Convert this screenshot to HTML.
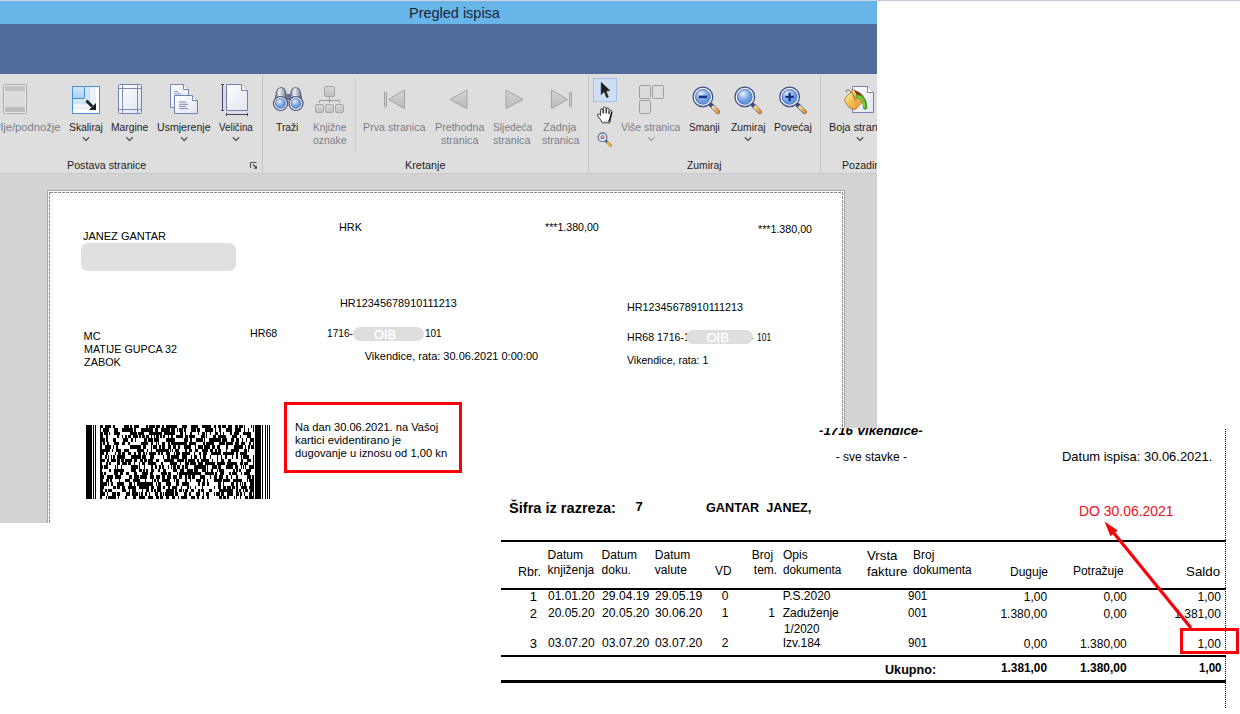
<!DOCTYPE html>
<html><head><meta charset="utf-8"><style>
html,body{margin:0;padding:0;background:#fff;width:1240px;height:714px;overflow:hidden;position:relative}
.t{position:absolute;white-space:pre;line-height:normal;font-family:"Liberation Sans",sans-serif}
</style></head><body>
<div id="s1" style="position:absolute;left:0;top:0;width:877px;height:523px;overflow:hidden;background:#d3d3d3">
<div style="position:absolute;left:0px;top:0px;width:877px;height:1px;background:#d3d5dd;"></div>
<div style="position:absolute;left:0px;top:1px;width:877px;height:23px;background:#67b5e9;"></div>
<div style="position:absolute;left:0px;top:24px;width:877px;height:50px;background:#4d6b9b;"></div>
<div style="position:absolute;left:0px;top:74px;width:877px;height:1px;background:#e2e0de;"></div>
<div style="position:absolute;left:0px;top:75px;width:877px;height:98px;background:#dedede;"></div>
<div style="position:absolute;left:0px;top:173px;width:877px;height:1px;background:#cbcbcb;"></div>
<div class=t style="left:408.50px;top:4px;font-size:15px;font-weight:normal;font-style:normal;color:#1b2438;transform:scaleX(0.9645);transform-origin:0 0;">Pregled ispisa</div>
<div class=t style="left:-33.50px;top:121px;font-size:11.5px;font-weight:normal;font-style:normal;color:#7b7e88;transform:scaleX(0.9752);transform-origin:0 0;">Zaglavlje/podnožje</div>
<div class=t style="left:68.60px;top:121px;font-size:11.5px;font-weight:normal;font-style:normal;color:#1e1e24;transform:scaleX(0.8980);transform-origin:0 0;">Skaliraj</div>
<div class=t style="left:110.70px;top:121px;font-size:11.5px;font-weight:normal;font-style:normal;color:#1e1e24;transform:scaleX(0.8988);transform-origin:0 0;">Margine</div>
<div class=t style="left:156.50px;top:121px;font-size:11.5px;font-weight:normal;font-style:normal;color:#1e1e24;transform:scaleX(0.9204);transform-origin:0 0;">Usmjerenje</div>
<div class=t style="left:219.00px;top:121px;font-size:11.5px;font-weight:normal;font-style:normal;color:#1e1e24;transform:scaleX(0.8528);transform-origin:0 0;">Veličina</div>
<div class=t style="left:275.60px;top:121px;font-size:11.5px;font-weight:normal;font-style:normal;color:#1e1e24;transform:scaleX(0.8915);transform-origin:0 0;">Traži</div>
<div class=t style="left:312.50px;top:121px;font-size:11.5px;font-weight:normal;font-style:normal;color:#7b7e88;transform:scaleX(0.8874);transform-origin:0 0;">Knjižne</div>
<div class=t style="left:312.50px;top:134px;font-size:11.5px;font-weight:normal;font-style:normal;color:#7b7e88;transform:scaleX(0.9051);transform-origin:0 0;">oznake</div>
<div class=t style="left:363.40px;top:121px;font-size:11.5px;font-weight:normal;font-style:normal;color:#7b7e88;transform:scaleX(0.9309);transform-origin:0 0;">Prva stranica</div>
<div class=t style="left:434.50px;top:121px;font-size:11.5px;font-weight:normal;font-style:normal;color:#7b7e88;transform:scaleX(0.9299);transform-origin:0 0;">Prethodna</div>
<div class=t style="left:440.50px;top:134px;font-size:11.5px;font-weight:normal;font-style:normal;color:#7b7e88;transform:scaleX(0.9288);transform-origin:0 0;">stranica</div>
<div class=t style="left:492.60px;top:121px;font-size:11.5px;font-weight:normal;font-style:normal;color:#7b7e88;transform:scaleX(0.8904);transform-origin:0 0;">Sljedeća</div>
<div class=t style="left:492.60px;top:134px;font-size:11.5px;font-weight:normal;font-style:normal;color:#7b7e88;transform:scaleX(0.9288);transform-origin:0 0;">stranica</div>
<div class=t style="left:543.00px;top:121px;font-size:11.5px;font-weight:normal;font-style:normal;color:#7b7e88;transform:scaleX(0.9504);transform-origin:0 0;">Zadnja</div>
<div class=t style="left:541.60px;top:134px;font-size:11.5px;font-weight:normal;font-style:normal;color:#7b7e88;transform:scaleX(0.9288);transform-origin:0 0;">stranica</div>
<div class=t style="left:620.70px;top:121px;font-size:11.5px;font-weight:normal;font-style:normal;color:#7b7e88;transform:scaleX(0.9049);transform-origin:0 0;">Više stranica</div>
<div class=t style="left:689.30px;top:121px;font-size:11.5px;font-weight:normal;font-style:normal;color:#1e1e24;transform:scaleX(0.8740);transform-origin:0 0;">Smanji</div>
<div class=t style="left:731.00px;top:121px;font-size:11.5px;font-weight:normal;font-style:normal;color:#1e1e24;transform:scaleX(0.8990);transform-origin:0 0;">Zumiraj</div>
<div class=t style="left:773.50px;top:121px;font-size:11.5px;font-weight:normal;font-style:normal;color:#1e1e24;transform:scaleX(0.9248);transform-origin:0 0;">Povećaj</div>
<div class=t style="left:828.50px;top:121px;font-size:11.5px;font-weight:normal;font-style:normal;color:#1e1e24;transform:scaleX(0.9398);transform-origin:0 0;">Boja stranice</div>
<div class=t style="left:66.70px;top:159px;font-size:11.5px;font-weight:normal;font-style:normal;color:#1e1e24;transform:scaleX(0.9329);transform-origin:0 0;">Postava stranice</div>
<div class=t style="left:404.50px;top:159px;font-size:11.5px;font-weight:normal;font-style:normal;color:#1e1e24;transform:scaleX(0.9446);transform-origin:0 0;">Kretanje</div>
<div class=t style="left:687.00px;top:159px;font-size:11.5px;font-weight:normal;font-style:normal;color:#1e1e24;transform:scaleX(0.8990);transform-origin:0 0;">Zumiraj</div>
<div class=t style="left:841.60px;top:159px;font-size:11.5px;font-weight:normal;font-style:normal;color:#1e1e24;transform:scaleX(0.9193);transform-origin:0 0;">Pozadina stranice</div>
<div style="position:absolute;left:262px;top:75px;width:1px;height:98px;background:#c6c6c6;"></div>
<div style="position:absolute;left:355px;top:78px;width:1px;height:74px;background:#cacaca;"></div>
<div style="position:absolute;left:588px;top:75px;width:1px;height:98px;background:#c6c6c6;"></div>
<div style="position:absolute;left:820px;top:75px;width:1px;height:98px;background:#c6c6c6;"></div>
<div style="position:absolute;left:47px;top:190px;width:798px;height:400px;background:#ffffff;box-sizing:border-box;border:1px solid #a6a6a6;"></div>
<svg style="position:absolute;left:0;top:0" width="877" height="523"><rect x="49.5" y="192.5" width="793" height="400" fill="none" stroke="#8a8a8a" stroke-width="1" stroke-dasharray="3 1" shape-rendering="crispEdges"/></svg>
<div class=t style="left:83.00px;top:230px;font-size:11px;font-weight:normal;font-style:normal;color:#000;">JANEZ GANTAR</div>
<div style="position:absolute;left:81px;top:243px;width:155px;height:28px;background:#e0e0e0;border-radius:7px;"></div>
<div class=t style="left:339.40px;top:221px;font-size:11px;font-weight:normal;font-style:normal;color:#000;transform:scaleX(0.9849);transform-origin:0 0;">HRK</div>
<div class=t style="left:545.20px;top:221px;font-size:11px;font-weight:normal;font-style:normal;color:#000;transform:scaleX(0.9654);transform-origin:0 0;">***1.380,00</div>
<div class=t style="left:758.00px;top:223px;font-size:11px;font-weight:normal;font-style:normal;color:#000;transform:scaleX(0.9708);transform-origin:0 0;">***1.380,00</div>
<div class=t style="left:339.80px;top:297px;font-size:11px;font-weight:normal;font-style:normal;color:#000;transform:scaleX(0.9886);transform-origin:0 0;">HR12345678910111213</div>
<div class=t style="left:627.40px;top:301px;font-size:11px;font-weight:normal;font-style:normal;color:#000;transform:scaleX(0.9818);transform-origin:0 0;">HR12345678910111213</div>
<div class=t style="left:83.50px;top:330px;font-size:11px;font-weight:normal;font-style:normal;color:#000;">MC</div>
<div class=t style="left:83.50px;top:343px;font-size:11px;font-weight:normal;font-style:normal;color:#000;transform:scaleX(0.9766);transform-origin:0 0;">MATIJE GUPCA 32</div>
<div class=t style="left:83.50px;top:356px;font-size:11px;font-weight:normal;font-style:normal;color:#000;transform:scaleX(0.9879);transform-origin:0 0;">ZABOK</div>
<div class=t style="left:250.20px;top:327px;font-size:11px;font-weight:normal;font-style:normal;color:#000;transform:scaleX(0.9707);transform-origin:0 0;">HR68</div>
<div class=t style="left:326.80px;top:327px;font-size:11px;font-weight:normal;font-style:normal;color:#000;transform:scaleX(0.9244);transform-origin:0 0;">1716-</div>
<div class=t style="left:424.60px;top:327px;font-size:11px;font-weight:normal;font-style:normal;color:#000;transform:scaleX(0.9088);transform-origin:0 0;">101</div>
<div style="position:absolute;left:353px;top:327px;width:71px;height:14px;background:#dedede;border-radius:7px;"></div>
<div class=t style="left:374.00px;top:327px;font-size:13px;font-weight:normal;font-style:normal;color:#ffffff;transform:scaleX(0.9922);transform-origin:0 0;-webkit-text-stroke:0.35px #fff;">OIB</div>
<div class=t style="left:364.70px;top:350px;font-size:11px;font-weight:normal;font-style:normal;color:#000;">Vikendice, rata: 30.06.2021 0:00:00</div>
<div class=t style="left:627.40px;top:331px;font-size:11px;font-weight:normal;font-style:normal;color:#000;transform:scaleX(0.9606);transform-origin:0 0;">HR68 1716-1</div>
<div class=t style="left:750.00px;top:331px;font-size:11px;font-weight:normal;font-style:normal;color:#000;transform:scaleX(0.9655);transform-origin:0 0;">-</div>
<div style="position:absolute;left:686px;top:330px;width:67px;height:14px;background:#dedede;border-radius:7px;"></div>
<div class=t style="left:706.50px;top:330px;font-size:13px;font-weight:normal;font-style:normal;color:#ffffff;-webkit-text-stroke:0.35px #fff;">OIB</div>
<div class=t style="left:756.50px;top:331px;font-size:11px;font-weight:normal;font-style:normal;color:#000;transform:scaleX(0.7728);transform-origin:0 0;">101</div>
<div class=t style="left:627.40px;top:354px;font-size:11px;font-weight:normal;font-style:normal;color:#000;transform:scaleX(0.9593);transform-origin:0 0;">Vikendice, rata: 1</div>
<svg style="position:absolute;left:86px;top:425px" width="185" height="74" shape-rendering="crispEdges"><g fill="#000"><rect x="0" y="0" width="6" height="74"/><rect x="7" y="0" width="1" height="74"/><rect x="9" y="0" width="1" height="74"/><rect x="169" y="0" width="6" height="74"/><rect x="176" y="0" width="1" height="74"/><rect x="179" y="0" width="1" height="74"/><rect x="181" y="0" width="1" height="74"/><rect x="183" y="0" width="1" height="74"/><path d="M14 0.00h3v3.36h-3zM19 0.00h2v3.36h-2zM21 0.00h2v3.36h-2zM23 0.00h2v3.36h-2zM27 0.00h1v3.36h-1zM28 0.00h1v3.36h-1zM38 0.00h2v3.36h-2zM40 0.00h2v3.36h-2zM42 0.00h1v3.36h-1zM44 0.00h2v3.36h-2zM48 0.00h2v3.36h-2zM50 0.00h3v3.36h-3zM60 0.00h2v3.36h-2zM63 0.00h1v3.36h-1zM64 0.00h1v3.36h-1zM65 0.00h1v3.36h-1zM66 0.00h3v3.36h-3zM70 0.00h1v3.36h-1zM71 0.00h3v3.36h-3zM76 0.00h1v3.36h-1zM77 0.00h1v3.36h-1zM80 0.00h1v3.36h-1zM81 0.00h3v3.36h-3zM84 0.00h1v3.36h-1zM85 0.00h2v3.36h-2zM87 0.00h2v3.36h-2zM89 0.00h2v3.36h-2zM96 0.00h1v3.36h-1zM97 0.00h1v3.36h-1zM98 0.00h2v3.36h-2zM100 0.00h1v3.36h-1zM105 0.00h1v3.36h-1zM106 0.00h1v3.36h-1zM107 0.00h1v3.36h-1zM108 0.00h2v3.36h-2zM110 0.00h1v3.36h-1zM111 0.00h1v3.36h-1zM116 0.00h2v3.36h-2zM118 0.00h2v3.36h-2zM120 0.00h2v3.36h-2zM122 0.00h2v3.36h-2zM124 0.00h1v3.36h-1zM128 0.00h2v3.36h-2zM132 0.00h2v3.36h-2zM134 0.00h1v3.36h-1zM136 0.00h1v3.36h-1zM137 0.00h3v3.36h-3zM142 0.00h2v3.36h-2zM144 0.00h2v3.36h-2zM149 0.00h1v3.36h-1zM150 0.00h1v3.36h-1zM151 0.00h1v3.36h-1zM153 0.00h1v3.36h-1zM154 0.00h2v3.36h-2zM156 0.00h1v3.36h-1zM158 0.00h1v3.36h-1zM165 0.00h1v3.36h-1zM167 0.00h1v3.36h-1zM14 3.36h1v3.36h-1zM17 3.36h2v3.36h-2zM19 3.36h1v3.36h-1zM20 3.36h1v3.36h-1zM21 3.36h2v3.36h-2zM28 3.36h1v3.36h-1zM29 3.36h3v3.36h-3zM36 3.36h2v3.36h-2zM38 3.36h3v3.36h-3zM41 3.36h2v3.36h-2zM43 3.36h1v3.36h-1zM44 3.36h3v3.36h-3zM48 3.36h2v3.36h-2zM55 3.36h2v3.36h-2zM57 3.36h2v3.36h-2zM59 3.36h2v3.36h-2zM61 3.36h2v3.36h-2zM63 3.36h1v3.36h-1zM64 3.36h3v3.36h-3zM69 3.36h2v3.36h-2zM71 3.36h1v3.36h-1zM75 3.36h2v3.36h-2zM77 3.36h1v3.36h-1zM78 3.36h3v3.36h-3zM81 3.36h3v3.36h-3zM85 3.36h2v3.36h-2zM87 3.36h1v3.36h-1zM88 3.36h1v3.36h-1zM91 3.36h1v3.36h-1zM93 3.36h2v3.36h-2zM95 3.36h2v3.36h-2zM98 3.36h2v3.36h-2zM105 3.36h2v3.36h-2zM107 3.36h1v3.36h-1zM108 3.36h1v3.36h-1zM109 3.36h1v3.36h-1zM111 3.36h3v3.36h-3zM119 3.36h3v3.36h-3zM122 3.36h2v3.36h-2zM124 3.36h3v3.36h-3zM129 3.36h1v3.36h-1zM133 3.36h2v3.36h-2zM140 3.36h1v3.36h-1zM141 3.36h3v3.36h-3zM144 3.36h2v3.36h-2zM149 3.36h1v3.36h-1zM150 3.36h2v3.36h-2zM152 3.36h2v3.36h-2zM154 3.36h1v3.36h-1zM158 3.36h1v3.36h-1zM162 3.36h1v3.36h-1zM167 3.36h1v3.36h-1zM14 6.73h3v3.36h-3zM18 6.73h1v3.36h-1zM19 6.73h1v3.36h-1zM20 6.73h1v3.36h-1zM21 6.73h1v3.36h-1zM23 6.73h1v3.36h-1zM28 6.73h3v3.36h-3zM31 6.73h3v3.36h-3zM44 6.73h2v3.36h-2zM46 6.73h3v3.36h-3zM49 6.73h2v3.36h-2zM52 6.73h2v3.36h-2zM54 6.73h2v3.36h-2zM56 6.73h2v3.36h-2zM63 6.73h2v3.36h-2zM65 6.73h1v3.36h-1zM66 6.73h3v3.36h-3zM69 6.73h2v3.36h-2zM71 6.73h2v3.36h-2zM73 6.73h2v3.36h-2zM75 6.73h1v3.36h-1zM78 6.73h1v3.36h-1zM79 6.73h2v3.36h-2zM81 6.73h1v3.36h-1zM82 6.73h1v3.36h-1zM83 6.73h1v3.36h-1zM84 6.73h1v3.36h-1zM85 6.73h1v3.36h-1zM86 6.73h1v3.36h-1zM87 6.73h2v3.36h-2zM94 6.73h3v3.36h-3zM99 6.73h1v3.36h-1zM104 6.73h2v3.36h-2zM112 6.73h1v3.36h-1zM116 6.73h2v3.36h-2zM118 6.73h1v3.36h-1zM120 6.73h1v3.36h-1zM124 6.73h1v3.36h-1zM129 6.73h3v3.36h-3zM134 6.73h1v3.36h-1zM137 6.73h1v3.36h-1zM144 6.73h1v3.36h-1zM145 6.73h1v3.36h-1zM148 6.73h2v3.36h-2zM150 6.73h2v3.36h-2zM152 6.73h1v3.36h-1zM157 6.73h2v3.36h-2zM159 6.73h1v3.36h-1zM160 6.73h2v3.36h-2zM162 6.73h1v3.36h-1zM163 6.73h2v3.36h-2zM14 10.09h2v3.36h-2zM16 10.09h1v3.36h-1zM20 10.09h2v3.36h-2zM31 10.09h2v3.36h-2zM36 10.09h1v3.36h-1zM39 10.09h2v3.36h-2zM42 10.09h3v3.36h-3zM47 10.09h2v3.36h-2zM49 10.09h1v3.36h-1zM50 10.09h1v3.36h-1zM51 10.09h1v3.36h-1zM53 10.09h2v3.36h-2zM56 10.09h3v3.36h-3zM60 10.09h2v3.36h-2zM62 10.09h1v3.36h-1zM65 10.09h1v3.36h-1zM68 10.09h1v3.36h-1zM70 10.09h1v3.36h-1zM71 10.09h2v3.36h-2zM74 10.09h1v3.36h-1zM75 10.09h1v3.36h-1zM77 10.09h2v3.36h-2zM82 10.09h1v3.36h-1zM85 10.09h1v3.36h-1zM86 10.09h1v3.36h-1zM90 10.09h1v3.36h-1zM91 10.09h2v3.36h-2zM93 10.09h2v3.36h-2zM95 10.09h1v3.36h-1zM96 10.09h1v3.36h-1zM99 10.09h2v3.36h-2zM101 10.09h1v3.36h-1zM103 10.09h3v3.36h-3zM106 10.09h3v3.36h-3zM115 10.09h1v3.36h-1zM116 10.09h3v3.36h-3zM120 10.09h1v3.36h-1zM127 10.09h1v3.36h-1zM128 10.09h2v3.36h-2zM132 10.09h1v3.36h-1zM133 10.09h2v3.36h-2zM135 10.09h3v3.36h-3zM138 10.09h2v3.36h-2zM146 10.09h3v3.36h-3zM149 10.09h2v3.36h-2zM154 10.09h1v3.36h-1zM161 10.09h3v3.36h-3zM164 10.09h1v3.36h-1zM14 13.45h1v3.36h-1zM15 13.45h3v3.36h-3zM18 13.45h1v3.36h-1zM20 13.45h1v3.36h-1zM21 13.45h1v3.36h-1zM27 13.45h2v3.36h-2zM29 13.45h1v3.36h-1zM37 13.45h1v3.36h-1zM38 13.45h3v3.36h-3zM41 13.45h1v3.36h-1zM45 13.45h2v3.36h-2zM49 13.45h1v3.36h-1zM58 13.45h2v3.36h-2zM60 13.45h1v3.36h-1zM62 13.45h2v3.36h-2zM64 13.45h1v3.36h-1zM65 13.45h2v3.36h-2zM68 13.45h1v3.36h-1zM69 13.45h3v3.36h-3zM72 13.45h1v3.36h-1zM80 13.45h1v3.36h-1zM81 13.45h1v3.36h-1zM82 13.45h2v3.36h-2zM84 13.45h1v3.36h-1zM85 13.45h1v3.36h-1zM86 13.45h3v3.36h-3zM98 13.45h1v3.36h-1zM99 13.45h3v3.36h-3zM104 13.45h2v3.36h-2zM110 13.45h2v3.36h-2zM112 13.45h2v3.36h-2zM114 13.45h2v3.36h-2zM116 13.45h1v3.36h-1zM118 13.45h1v3.36h-1zM123 13.45h3v3.36h-3zM126 13.45h3v3.36h-3zM129 13.45h2v3.36h-2zM131 13.45h2v3.36h-2zM133 13.45h2v3.36h-2zM136 13.45h2v3.36h-2zM138 13.45h3v3.36h-3zM145 13.45h3v3.36h-3zM150 13.45h1v3.36h-1zM151 13.45h2v3.36h-2zM156 13.45h1v3.36h-1zM160 13.45h1v3.36h-1zM164 13.45h1v3.36h-1zM165 13.45h3v3.36h-3zM14 16.82h2v3.36h-2zM17 16.82h2v3.36h-2zM21 16.82h1v3.36h-1zM22 16.82h1v3.36h-1zM28 16.82h2v3.36h-2zM30 16.82h1v3.36h-1zM31 16.82h2v3.36h-2zM36 16.82h2v3.36h-2zM38 16.82h1v3.36h-1zM42 16.82h1v3.36h-1zM43 16.82h1v3.36h-1zM55 16.82h3v3.36h-3zM58 16.82h1v3.36h-1zM59 16.82h1v3.36h-1zM60 16.82h2v3.36h-2zM65 16.82h2v3.36h-2zM70 16.82h1v3.36h-1zM72 16.82h1v3.36h-1zM76 16.82h3v3.36h-3zM82 16.82h2v3.36h-2zM85 16.82h2v3.36h-2zM87 16.82h3v3.36h-3zM90 16.82h2v3.36h-2zM92 16.82h2v3.36h-2zM94 16.82h2v3.36h-2zM96 16.82h1v3.36h-1zM97 16.82h2v3.36h-2zM99 16.82h2v3.36h-2zM103 16.82h1v3.36h-1zM104 16.82h3v3.36h-3zM107 16.82h3v3.36h-3zM117 16.82h1v3.36h-1zM118 16.82h1v3.36h-1zM120 16.82h3v3.36h-3zM123 16.82h2v3.36h-2zM125 16.82h3v3.36h-3zM133 16.82h2v3.36h-2zM135 16.82h1v3.36h-1zM136 16.82h3v3.36h-3zM140 16.82h2v3.36h-2zM142 16.82h3v3.36h-3zM145 16.82h2v3.36h-2zM149 16.82h3v3.36h-3zM152 16.82h1v3.36h-1zM155 16.82h1v3.36h-1zM156 16.82h1v3.36h-1zM157 16.82h1v3.36h-1zM158 16.82h1v3.36h-1zM163 16.82h2v3.36h-2zM167 16.82h1v3.36h-1zM14 20.18h2v3.36h-2zM19 20.18h1v3.36h-1zM20 20.18h1v3.36h-1zM21 20.18h2v3.36h-2zM23 20.18h2v3.36h-2zM27 20.18h1v3.36h-1zM30 20.18h2v3.36h-2zM44 20.18h1v3.36h-1zM45 20.18h2v3.36h-2zM47 20.18h1v3.36h-1zM48 20.18h2v3.36h-2zM50 20.18h1v3.36h-1zM51 20.18h1v3.36h-1zM52 20.18h3v3.36h-3zM57 20.18h2v3.36h-2zM59 20.18h1v3.36h-1zM65 20.18h1v3.36h-1zM67 20.18h1v3.36h-1zM68 20.18h2v3.36h-2zM70 20.18h1v3.36h-1zM73 20.18h2v3.36h-2zM76 20.18h3v3.36h-3zM82 20.18h3v3.36h-3zM87 20.18h1v3.36h-1zM88 20.18h2v3.36h-2zM92 20.18h1v3.36h-1zM93 20.18h1v3.36h-1zM98 20.18h1v3.36h-1zM99 20.18h3v3.36h-3zM102 20.18h2v3.36h-2zM104 20.18h1v3.36h-1zM109 20.18h1v3.36h-1zM112 20.18h3v3.36h-3zM115 20.18h2v3.36h-2zM118 20.18h2v3.36h-2zM120 20.18h2v3.36h-2zM122 20.18h1v3.36h-1zM123 20.18h1v3.36h-1zM126 20.18h3v3.36h-3zM131 20.18h1v3.36h-1zM132 20.18h2v3.36h-2zM140 20.18h2v3.36h-2zM148 20.18h3v3.36h-3zM151 20.18h2v3.36h-2zM153 20.18h1v3.36h-1zM154 20.18h3v3.36h-3zM159 20.18h1v3.36h-1zM162 20.18h2v3.36h-2zM165 20.18h1v3.36h-1zM166 20.18h1v3.36h-1zM167 20.18h1v3.36h-1zM14 23.55h3v3.36h-3zM17 23.55h1v3.36h-1zM18 23.55h2v3.36h-2zM20 23.55h1v3.36h-1zM21 23.55h1v3.36h-1zM22 23.55h2v3.36h-2zM26 23.55h1v3.36h-1zM30 23.55h1v3.36h-1zM31 23.55h2v3.36h-2zM33 23.55h2v3.36h-2zM38 23.55h2v3.36h-2zM40 23.55h3v3.36h-3zM51 23.55h2v3.36h-2zM53 23.55h1v3.36h-1zM54 23.55h1v3.36h-1zM55 23.55h3v3.36h-3zM61 23.55h1v3.36h-1zM65 23.55h1v3.36h-1zM70 23.55h1v3.36h-1zM71 23.55h3v3.36h-3zM74 23.55h1v3.36h-1zM75 23.55h2v3.36h-2zM77 23.55h1v3.36h-1zM78 23.55h2v3.36h-2zM80 23.55h1v3.36h-1zM81 23.55h2v3.36h-2zM84 23.55h1v3.36h-1zM86 23.55h1v3.36h-1zM89 23.55h2v3.36h-2zM91 23.55h2v3.36h-2zM99 23.55h2v3.36h-2zM103 23.55h1v3.36h-1zM104 23.55h2v3.36h-2zM109 23.55h3v3.36h-3zM116 23.55h2v3.36h-2zM118 23.55h1v3.36h-1zM119 23.55h3v3.36h-3zM124 23.55h1v3.36h-1zM125 23.55h2v3.36h-2zM129 23.55h2v3.36h-2zM132 23.55h1v3.36h-1zM133 23.55h2v3.36h-2zM140 23.55h1v3.36h-1zM145 23.55h2v3.36h-2zM147 23.55h2v3.36h-2zM149 23.55h1v3.36h-1zM150 23.55h3v3.36h-3zM158 23.55h1v3.36h-1zM159 23.55h2v3.36h-2zM162 23.55h1v3.36h-1zM14 26.91h1v3.36h-1zM15 26.91h1v3.36h-1zM16 26.91h2v3.36h-2zM20 26.91h2v3.36h-2zM29 26.91h1v3.36h-1zM32 26.91h2v3.36h-2zM34 26.91h1v3.36h-1zM36 26.91h2v3.36h-2zM38 26.91h1v3.36h-1zM42 26.91h3v3.36h-3zM48 26.91h2v3.36h-2zM52 26.91h1v3.36h-1zM53 26.91h1v3.36h-1zM54 26.91h1v3.36h-1zM57 26.91h2v3.36h-2zM60 26.91h1v3.36h-1zM63 26.91h3v3.36h-3zM66 26.91h2v3.36h-2zM68 26.91h2v3.36h-2zM72 26.91h2v3.36h-2zM75 26.91h2v3.36h-2zM80 26.91h1v3.36h-1zM81 26.91h1v3.36h-1zM82 26.91h2v3.36h-2zM88 26.91h1v3.36h-1zM90 26.91h2v3.36h-2zM92 26.91h2v3.36h-2zM96 26.91h1v3.36h-1zM97 26.91h1v3.36h-1zM98 26.91h1v3.36h-1zM99 26.91h2v3.36h-2zM101 26.91h1v3.36h-1zM102 26.91h2v3.36h-2zM108 26.91h1v3.36h-1zM113 26.91h2v3.36h-2zM117 26.91h1v3.36h-1zM118 26.91h1v3.36h-1zM119 26.91h2v3.36h-2zM125 26.91h2v3.36h-2zM127 26.91h3v3.36h-3zM130 26.91h3v3.36h-3zM133 26.91h2v3.36h-2zM137 26.91h3v3.36h-3zM140 26.91h1v3.36h-1zM141 26.91h3v3.36h-3zM144 26.91h2v3.36h-2zM146 26.91h2v3.36h-2zM150 26.91h2v3.36h-2zM154 26.91h1v3.36h-1zM155 26.91h2v3.36h-2zM157 26.91h1v3.36h-1zM158 26.91h3v3.36h-3zM14 30.27h2v3.36h-2zM19 30.27h2v3.36h-2zM22 30.27h1v3.36h-1zM25 30.27h1v3.36h-1zM27 30.27h1v3.36h-1zM28 30.27h1v3.36h-1zM31 30.27h2v3.36h-2zM33 30.27h3v3.36h-3zM36 30.27h2v3.36h-2zM38 30.27h1v3.36h-1zM45 30.27h2v3.36h-2zM47 30.27h1v3.36h-1zM48 30.27h3v3.36h-3zM51 30.27h2v3.36h-2zM53 30.27h2v3.36h-2zM56 30.27h1v3.36h-1zM57 30.27h1v3.36h-1zM58 30.27h1v3.36h-1zM59 30.27h1v3.36h-1zM64 30.27h1v3.36h-1zM65 30.27h3v3.36h-3zM77 30.27h1v3.36h-1zM81 30.27h3v3.36h-3zM85 30.27h1v3.36h-1zM86 30.27h3v3.36h-3zM89 30.27h2v3.36h-2zM91 30.27h2v3.36h-2zM96 30.27h2v3.36h-2zM98 30.27h1v3.36h-1zM99 30.27h2v3.36h-2zM105 30.27h1v3.36h-1zM108 30.27h3v3.36h-3zM114 30.27h1v3.36h-1zM117 30.27h3v3.36h-3zM124 30.27h1v3.36h-1zM131 30.27h1v3.36h-1zM135 30.27h1v3.36h-1zM139 30.27h1v3.36h-1zM140 30.27h1v3.36h-1zM146 30.27h1v3.36h-1zM150 30.27h1v3.36h-1zM151 30.27h1v3.36h-1zM155 30.27h1v3.36h-1zM157 30.27h2v3.36h-2zM159 30.27h1v3.36h-1zM160 30.27h3v3.36h-3zM167 30.27h1v3.36h-1zM14 33.64h2v3.36h-2zM16 33.64h2v3.36h-2zM18 33.64h1v3.36h-1zM21 33.64h2v3.36h-2zM25 33.64h1v3.36h-1zM26 33.64h2v3.36h-2zM28 33.64h1v3.36h-1zM29 33.64h1v3.36h-1zM31 33.64h2v3.36h-2zM33 33.64h1v3.36h-1zM35 33.64h1v3.36h-1zM36 33.64h2v3.36h-2zM39 33.64h2v3.36h-2zM41 33.64h2v3.36h-2zM43 33.64h2v3.36h-2zM45 33.64h1v3.36h-1zM48 33.64h2v3.36h-2zM50 33.64h1v3.36h-1zM54 33.64h3v3.36h-3zM58 33.64h2v3.36h-2zM60 33.64h1v3.36h-1zM62 33.64h1v3.36h-1zM63 33.64h2v3.36h-2zM65 33.64h2v3.36h-2zM70 33.64h3v3.36h-3zM78 33.64h2v3.36h-2zM80 33.64h3v3.36h-3zM83 33.64h2v3.36h-2zM85 33.64h2v3.36h-2zM87 33.64h1v3.36h-1zM91 33.64h2v3.36h-2zM93 33.64h1v3.36h-1zM94 33.64h3v3.36h-3zM97 33.64h1v3.36h-1zM99 33.64h2v3.36h-2zM102 33.64h2v3.36h-2zM104 33.64h1v3.36h-1zM105 33.64h1v3.36h-1zM106 33.64h1v3.36h-1zM107 33.64h2v3.36h-2zM111 33.64h2v3.36h-2zM115 33.64h1v3.36h-1zM116 33.64h2v3.36h-2zM118 33.64h1v3.36h-1zM119 33.64h2v3.36h-2zM121 33.64h1v3.36h-1zM122 33.64h1v3.36h-1zM126 33.64h1v3.36h-1zM131 33.64h1v3.36h-1zM135 33.64h3v3.36h-3zM142 33.64h3v3.36h-3zM155 33.64h2v3.36h-2zM161 33.64h2v3.36h-2zM163 33.64h2v3.36h-2zM167 33.64h1v3.36h-1zM14 37.00h2v3.36h-2zM20 37.00h2v3.36h-2zM23 37.00h2v3.36h-2zM31 37.00h2v3.36h-2zM33 37.00h1v3.36h-1zM36 37.00h1v3.36h-1zM37 37.00h2v3.36h-2zM39 37.00h2v3.36h-2zM42 37.00h1v3.36h-1zM43 37.00h2v3.36h-2zM48 37.00h1v3.36h-1zM53 37.00h1v3.36h-1zM56 37.00h1v3.36h-1zM57 37.00h2v3.36h-2zM62 37.00h2v3.36h-2zM64 37.00h3v3.36h-3zM67 37.00h3v3.36h-3zM75 37.00h2v3.36h-2zM84 37.00h3v3.36h-3zM87 37.00h1v3.36h-1zM88 37.00h2v3.36h-2zM90 37.00h1v3.36h-1zM94 37.00h1v3.36h-1zM99 37.00h2v3.36h-2zM101 37.00h2v3.36h-2zM104 37.00h2v3.36h-2zM106 37.00h2v3.36h-2zM108 37.00h2v3.36h-2zM112 37.00h2v3.36h-2zM114 37.00h2v3.36h-2zM116 37.00h1v3.36h-1zM119 37.00h2v3.36h-2zM121 37.00h2v3.36h-2zM123 37.00h3v3.36h-3zM126 37.00h1v3.36h-1zM127 37.00h1v3.36h-1zM128 37.00h1v3.36h-1zM131 37.00h1v3.36h-1zM132 37.00h3v3.36h-3zM135 37.00h2v3.36h-2zM137 37.00h2v3.36h-2zM141 37.00h1v3.36h-1zM142 37.00h1v3.36h-1zM143 37.00h2v3.36h-2zM145 37.00h3v3.36h-3zM148 37.00h1v3.36h-1zM149 37.00h1v3.36h-1zM150 37.00h1v3.36h-1zM154 37.00h3v3.36h-3zM158 37.00h1v3.36h-1zM159 37.00h1v3.36h-1zM160 37.00h2v3.36h-2zM167 37.00h1v3.36h-1zM14 40.36h3v3.36h-3zM18 40.36h3v3.36h-3zM21 40.36h1v3.36h-1zM29 40.36h1v3.36h-1zM31 40.36h1v3.36h-1zM35 40.36h1v3.36h-1zM45 40.36h3v3.36h-3zM48 40.36h1v3.36h-1zM49 40.36h2v3.36h-2zM51 40.36h1v3.36h-1zM53 40.36h1v3.36h-1zM58 40.36h1v3.36h-1zM65 40.36h2v3.36h-2zM69 40.36h2v3.36h-2zM73 40.36h2v3.36h-2zM76 40.36h2v3.36h-2zM82 40.36h1v3.36h-1zM85 40.36h1v3.36h-1zM87 40.36h3v3.36h-3zM91 40.36h1v3.36h-1zM92 40.36h2v3.36h-2zM96 40.36h1v3.36h-1zM97 40.36h1v3.36h-1zM99 40.36h3v3.36h-3zM108 40.36h1v3.36h-1zM109 40.36h1v3.36h-1zM110 40.36h2v3.36h-2zM112 40.36h1v3.36h-1zM113 40.36h2v3.36h-2zM115 40.36h3v3.36h-3zM118 40.36h2v3.36h-2zM121 40.36h1v3.36h-1zM126 40.36h3v3.36h-3zM129 40.36h1v3.36h-1zM130 40.36h1v3.36h-1zM132 40.36h2v3.36h-2zM134 40.36h1v3.36h-1zM140 40.36h3v3.36h-3zM143 40.36h1v3.36h-1zM144 40.36h2v3.36h-2zM146 40.36h1v3.36h-1zM149 40.36h1v3.36h-1zM150 40.36h1v3.36h-1zM151 40.36h1v3.36h-1zM155 40.36h1v3.36h-1zM157 40.36h1v3.36h-1zM159 40.36h1v3.36h-1zM163 40.36h2v3.36h-2zM165 40.36h2v3.36h-2zM167 40.36h1v3.36h-1zM14 43.73h2v3.36h-2zM23 43.73h2v3.36h-2zM28 43.73h1v3.36h-1zM29 43.73h1v3.36h-1zM30 43.73h1v3.36h-1zM31 43.73h3v3.36h-3zM34 43.73h3v3.36h-3zM37 43.73h1v3.36h-1zM45 43.73h3v3.36h-3zM48 43.73h2v3.36h-2zM53 43.73h2v3.36h-2zM55 43.73h1v3.36h-1zM57 43.73h1v3.36h-1zM58 43.73h1v3.36h-1zM60 43.73h2v3.36h-2zM65 43.73h3v3.36h-3zM72 43.73h2v3.36h-2zM77 43.73h2v3.36h-2zM79 43.73h1v3.36h-1zM87 43.73h2v3.36h-2zM89 43.73h2v3.36h-2zM94 43.73h1v3.36h-1zM95 43.73h2v3.36h-2zM97 43.73h1v3.36h-1zM101 43.73h1v3.36h-1zM102 43.73h3v3.36h-3zM105 43.73h2v3.36h-2zM108 43.73h2v3.36h-2zM110 43.73h2v3.36h-2zM116 43.73h1v3.36h-1zM117 43.73h3v3.36h-3zM121 43.73h1v3.36h-1zM125 43.73h1v3.36h-1zM126 43.73h1v3.36h-1zM131 43.73h1v3.36h-1zM133 43.73h2v3.36h-2zM135 43.73h3v3.36h-3zM147 43.73h1v3.36h-1zM148 43.73h1v3.36h-1zM150 43.73h2v3.36h-2zM153 43.73h1v3.36h-1zM154 43.73h1v3.36h-1zM160 43.73h2v3.36h-2zM162 43.73h3v3.36h-3zM14 47.09h2v3.36h-2zM16 47.09h1v3.36h-1zM18 47.09h2v3.36h-2zM28 47.09h1v3.36h-1zM29 47.09h2v3.36h-2zM31 47.09h1v3.36h-1zM34 47.09h1v3.36h-1zM35 47.09h1v3.36h-1zM36 47.09h1v3.36h-1zM40 47.09h1v3.36h-1zM41 47.09h2v3.36h-2zM48 47.09h3v3.36h-3zM56 47.09h1v3.36h-1zM57 47.09h2v3.36h-2zM59 47.09h3v3.36h-3zM64 47.09h2v3.36h-2zM66 47.09h1v3.36h-1zM75 47.09h2v3.36h-2zM77 47.09h1v3.36h-1zM78 47.09h2v3.36h-2zM80 47.09h1v3.36h-1zM82 47.09h1v3.36h-1zM83 47.09h2v3.36h-2zM91 47.09h1v3.36h-1zM93 47.09h1v3.36h-1zM94 47.09h1v3.36h-1zM95 47.09h2v3.36h-2zM97 47.09h1v3.36h-1zM98 47.09h2v3.36h-2zM100 47.09h3v3.36h-3zM103 47.09h3v3.36h-3zM106 47.09h3v3.36h-3zM109 47.09h2v3.36h-2zM111 47.09h1v3.36h-1zM112 47.09h2v3.36h-2zM114 47.09h1v3.36h-1zM119 47.09h2v3.36h-2zM121 47.09h1v3.36h-1zM122 47.09h1v3.36h-1zM123 47.09h2v3.36h-2zM125 47.09h3v3.36h-3zM129 47.09h2v3.36h-2zM134 47.09h1v3.36h-1zM135 47.09h1v3.36h-1zM136 47.09h1v3.36h-1zM137 47.09h1v3.36h-1zM143 47.09h1v3.36h-1zM144 47.09h1v3.36h-1zM146 47.09h3v3.36h-3zM149 47.09h1v3.36h-1zM150 47.09h1v3.36h-1zM155 47.09h1v3.36h-1zM158 47.09h1v3.36h-1zM159 47.09h1v3.36h-1zM160 47.09h3v3.36h-3zM163 47.09h1v3.36h-1zM14 50.45h3v3.36h-3zM17 50.45h1v3.36h-1zM21 50.45h3v3.36h-3zM24 50.45h1v3.36h-1zM25 50.45h1v3.36h-1zM26 50.45h1v3.36h-1zM29 50.45h2v3.36h-2zM31 50.45h2v3.36h-2zM33 50.45h1v3.36h-1zM34 50.45h1v3.36h-1zM43 50.45h1v3.36h-1zM44 50.45h2v3.36h-2zM48 50.45h3v3.36h-3zM51 50.45h2v3.36h-2zM54 50.45h3v3.36h-3zM57 50.45h2v3.36h-2zM59 50.45h1v3.36h-1zM60 50.45h1v3.36h-1zM64 50.45h1v3.36h-1zM65 50.45h3v3.36h-3zM70 50.45h1v3.36h-1zM71 50.45h1v3.36h-1zM72 50.45h1v3.36h-1zM73 50.45h1v3.36h-1zM76 50.45h3v3.36h-3zM81 50.45h1v3.36h-1zM82 50.45h3v3.36h-3zM87 50.45h2v3.36h-2zM89 50.45h2v3.36h-2zM93 50.45h3v3.36h-3zM99 50.45h2v3.36h-2zM102 50.45h2v3.36h-2zM104 50.45h1v3.36h-1zM106 50.45h1v3.36h-1zM107 50.45h2v3.36h-2zM114 50.45h3v3.36h-3zM117 50.45h2v3.36h-2zM124 50.45h1v3.36h-1zM128 50.45h1v3.36h-1zM129 50.45h2v3.36h-2zM133 50.45h3v3.36h-3zM136 50.45h1v3.36h-1zM140 50.45h2v3.36h-2zM145 50.45h1v3.36h-1zM150 50.45h2v3.36h-2zM161 50.45h1v3.36h-1zM162 50.45h2v3.36h-2zM164 50.45h1v3.36h-1zM166 50.45h2v3.36h-2zM14 53.82h3v3.36h-3zM20 53.82h3v3.36h-3zM24 53.82h2v3.36h-2zM33 53.82h1v3.36h-1zM39 53.82h2v3.36h-2zM41 53.82h3v3.36h-3zM47 53.82h1v3.36h-1zM48 53.82h1v3.36h-1zM49 53.82h3v3.36h-3zM52 53.82h2v3.36h-2zM59 53.82h1v3.36h-1zM66 53.82h1v3.36h-1zM68 53.82h2v3.36h-2zM71 53.82h2v3.36h-2zM76 53.82h1v3.36h-1zM77 53.82h2v3.36h-2zM79 53.82h2v3.36h-2zM81 53.82h1v3.36h-1zM82 53.82h2v3.36h-2zM88 53.82h1v3.36h-1zM90 53.82h1v3.36h-1zM91 53.82h2v3.36h-2zM99 53.82h2v3.36h-2zM104 53.82h1v3.36h-1zM110 53.82h1v3.36h-1zM111 53.82h3v3.36h-3zM114 53.82h1v3.36h-1zM117 53.82h2v3.36h-2zM121 53.82h1v3.36h-1zM128 53.82h3v3.36h-3zM131 53.82h3v3.36h-3zM134 53.82h2v3.36h-2zM137 53.82h1v3.36h-1zM138 53.82h2v3.36h-2zM140 53.82h1v3.36h-1zM141 53.82h3v3.36h-3zM147 53.82h3v3.36h-3zM150 53.82h2v3.36h-2zM152 53.82h3v3.36h-3zM155 53.82h1v3.36h-1zM161 53.82h1v3.36h-1zM163 53.82h2v3.36h-2zM165 53.82h3v3.36h-3zM14 57.18h3v3.36h-3zM17 57.18h2v3.36h-2zM19 57.18h2v3.36h-2zM22 57.18h1v3.36h-1zM25 57.18h2v3.36h-2zM31 57.18h3v3.36h-3zM34 57.18h3v3.36h-3zM37 57.18h1v3.36h-1zM43 57.18h3v3.36h-3zM48 57.18h1v3.36h-1zM51 57.18h3v3.36h-3zM54 57.18h3v3.36h-3zM57 57.18h2v3.36h-2zM59 57.18h2v3.36h-2zM61 57.18h2v3.36h-2zM63 57.18h2v3.36h-2zM65 57.18h2v3.36h-2zM70 57.18h1v3.36h-1zM72 57.18h3v3.36h-3zM80 57.18h3v3.36h-3zM83 57.18h2v3.36h-2zM90 57.18h1v3.36h-1zM91 57.18h2v3.36h-2zM96 57.18h1v3.36h-1zM97 57.18h2v3.36h-2zM99 57.18h3v3.36h-3zM102 57.18h1v3.36h-1zM112 57.18h2v3.36h-2zM116 57.18h1v3.36h-1zM117 57.18h1v3.36h-1zM118 57.18h1v3.36h-1zM121 57.18h1v3.36h-1zM122 57.18h1v3.36h-1zM132 57.18h2v3.36h-2zM134 57.18h1v3.36h-1zM137 57.18h1v3.36h-1zM145 57.18h3v3.36h-3zM150 57.18h2v3.36h-2zM154 57.18h1v3.36h-1zM156 57.18h1v3.36h-1zM158 57.18h2v3.36h-2zM164 57.18h2v3.36h-2zM166 57.18h2v3.36h-2zM14 60.55h2v3.36h-2zM16 60.55h1v3.36h-1zM17 60.55h1v3.36h-1zM27 60.55h2v3.36h-2zM29 60.55h1v3.36h-1zM31 60.55h3v3.36h-3zM36 60.55h2v3.36h-2zM38 60.55h1v3.36h-1zM42 60.55h2v3.36h-2zM44 60.55h3v3.36h-3zM47 60.55h3v3.36h-3zM53 60.55h1v3.36h-1zM54 60.55h1v3.36h-1zM55 60.55h1v3.36h-1zM56 60.55h1v3.36h-1zM57 60.55h1v3.36h-1zM58 60.55h1v3.36h-1zM59 60.55h1v3.36h-1zM60 60.55h1v3.36h-1zM61 60.55h2v3.36h-2zM65 60.55h3v3.36h-3zM71 60.55h1v3.36h-1zM72 60.55h2v3.36h-2zM74 60.55h1v3.36h-1zM77 60.55h1v3.36h-1zM78 60.55h1v3.36h-1zM82 60.55h2v3.36h-2zM86 60.55h3v3.36h-3zM89 60.55h2v3.36h-2zM95 60.55h1v3.36h-1zM101 60.55h2v3.36h-2zM104 60.55h1v3.36h-1zM109 60.55h1v3.36h-1zM116 60.55h1v3.36h-1zM128 60.55h1v3.36h-1zM132 60.55h2v3.36h-2zM134 60.55h1v3.36h-1zM137 60.55h3v3.36h-3zM141 60.55h3v3.36h-3zM144 60.55h1v3.36h-1zM146 60.55h3v3.36h-3zM150 60.55h2v3.36h-2zM155 60.55h3v3.36h-3zM158 60.55h3v3.36h-3zM163 60.55h1v3.36h-1zM164 60.55h3v3.36h-3zM167 60.55h1v3.36h-1zM14 63.91h3v3.36h-3zM19 63.91h1v3.36h-1zM20 63.91h1v3.36h-1zM22 63.91h1v3.36h-1zM23 63.91h3v3.36h-3zM36 63.91h3v3.36h-3zM39 63.91h1v3.36h-1zM43 63.91h1v3.36h-1zM46 63.91h2v3.36h-2zM48 63.91h2v3.36h-2zM56 63.91h1v3.36h-1zM60 63.91h1v3.36h-1zM61 63.91h2v3.36h-2zM65 63.91h2v3.36h-2zM68 63.91h1v3.36h-1zM69 63.91h1v3.36h-1zM71 63.91h1v3.36h-1zM72 63.91h3v3.36h-3zM80 63.91h1v3.36h-1zM81 63.91h1v3.36h-1zM82 63.91h3v3.36h-3zM85 63.91h1v3.36h-1zM86 63.91h2v3.36h-2zM89 63.91h2v3.36h-2zM93 63.91h2v3.36h-2zM95 63.91h1v3.36h-1zM97 63.91h1v3.36h-1zM99 63.91h3v3.36h-3zM105 63.91h3v3.36h-3zM112 63.91h1v3.36h-1zM113 63.91h1v3.36h-1zM115 63.91h3v3.36h-3zM123 63.91h3v3.36h-3zM133 63.91h3v3.36h-3zM136 63.91h3v3.36h-3zM139 63.91h2v3.36h-2zM141 63.91h2v3.36h-2zM143 63.91h1v3.36h-1zM144 63.91h3v3.36h-3zM150 63.91h2v3.36h-2zM153 63.91h2v3.36h-2zM157 63.91h1v3.36h-1zM159 63.91h2v3.36h-2zM161 63.91h1v3.36h-1zM164 63.91h3v3.36h-3zM167 63.91h1v3.36h-1zM14 67.27h1v3.36h-1zM15 67.27h3v3.36h-3zM18 67.27h1v3.36h-1zM21 67.27h1v3.36h-1zM26 67.27h2v3.36h-2zM28 67.27h2v3.36h-2zM31 67.27h3v3.36h-3zM40 67.27h1v3.36h-1zM41 67.27h2v3.36h-2zM43 67.27h1v3.36h-1zM46 67.27h3v3.36h-3zM49 67.27h3v3.36h-3zM53 67.27h1v3.36h-1zM55 67.27h2v3.36h-2zM59 67.27h1v3.36h-1zM60 67.27h1v3.36h-1zM63 67.27h1v3.36h-1zM69 67.27h3v3.36h-3zM74 67.27h2v3.36h-2zM77 67.27h1v3.36h-1zM79 67.27h2v3.36h-2zM81 67.27h2v3.36h-2zM83 67.27h1v3.36h-1zM84 67.27h2v3.36h-2zM86 67.27h1v3.36h-1zM87 67.27h1v3.36h-1zM89 67.27h3v3.36h-3zM98 67.27h3v3.36h-3zM103 67.27h1v3.36h-1zM104 67.27h1v3.36h-1zM110 67.27h2v3.36h-2zM112 67.27h2v3.36h-2zM117 67.27h1v3.36h-1zM120 67.27h2v3.36h-2zM122 67.27h1v3.36h-1zM128 67.27h1v3.36h-1zM130 67.27h1v3.36h-1zM131 67.27h1v3.36h-1zM132 67.27h1v3.36h-1zM133 67.27h1v3.36h-1zM135 67.27h3v3.36h-3zM141 67.27h2v3.36h-2zM143 67.27h2v3.36h-2zM145 67.27h2v3.36h-2zM150 67.27h3v3.36h-3zM154 67.27h2v3.36h-2zM158 67.27h1v3.36h-1zM163 67.27h1v3.36h-1zM164 67.27h2v3.36h-2zM167 67.27h1v3.36h-1zM14 70.64h2v3.36h-2zM20 70.64h1v3.36h-1zM22 70.64h1v3.36h-1zM23 70.64h2v3.36h-2zM25 70.64h3v3.36h-3zM28 70.64h1v3.36h-1zM29 70.64h1v3.36h-1zM32 70.64h1v3.36h-1zM39 70.64h2v3.36h-2zM47 70.64h1v3.36h-1zM48 70.64h2v3.36h-2zM53 70.64h1v3.36h-1zM54 70.64h3v3.36h-3zM57 70.64h2v3.36h-2zM62 70.64h3v3.36h-3zM65 70.64h2v3.36h-2zM70 70.64h3v3.36h-3zM74 70.64h2v3.36h-2zM76 70.64h1v3.36h-1zM80 70.64h1v3.36h-1zM81 70.64h2v3.36h-2zM86 70.64h1v3.36h-1zM87 70.64h1v3.36h-1zM88 70.64h1v3.36h-1zM92 70.64h1v3.36h-1zM95 70.64h1v3.36h-1zM96 70.64h2v3.36h-2zM98 70.64h1v3.36h-1zM99 70.64h2v3.36h-2zM105 70.64h1v3.36h-1zM106 70.64h3v3.36h-3zM111 70.64h2v3.36h-2zM116 70.64h2v3.36h-2zM121 70.64h2v3.36h-2zM133 70.64h3v3.36h-3zM137 70.64h3v3.36h-3zM141 70.64h1v3.36h-1zM142 70.64h1v3.36h-1zM148 70.64h1v3.36h-1zM150 70.64h1v3.36h-1zM154 70.64h1v3.36h-1zM159 70.64h3v3.36h-3zM163 70.64h1v3.36h-1zM164 70.64h1v3.36h-1zM165 70.64h3v3.36h-3z"/></g></svg>
<div style="position:absolute;left:284px;top:402px;width:178px;height:71px;background:transparent;box-sizing:border-box;border:3px solid #fb0007;"></div>
<div class=t style="left:294.60px;top:421px;font-size:11px;font-weight:normal;font-style:normal;color:#000;transform:scaleX(1.0111);transform-origin:0 0;">Na dan 30.06.2021. na Vašoj</div>
<div class=t style="left:294.80px;top:434px;font-size:11px;font-weight:normal;font-style:normal;color:#000;transform:scaleX(1.0273);transform-origin:0 0;">kartici evidentirano je</div>
<div class=t style="left:294.80px;top:447px;font-size:11px;font-weight:normal;font-style:normal;color:#000;transform:scaleX(1.0198);transform-origin:0 0;">dugovanje u iznosu od 1,00 kn</div>
<svg style="position:absolute;left:0;top:0" width="877" height="180">
<defs>
<linearGradient id="gPage" x1="0" y1="0" x2="1" y2="1"><stop offset="0" stop-color="#ffffff"/><stop offset="1" stop-color="#dfe4f0"/></linearGradient>
<linearGradient id="gGray" x1="0" y1="0" x2="0" y2="1"><stop offset="0" stop-color="#dadada"/><stop offset="1" stop-color="#bdbdbd"/></linearGradient>
<linearGradient id="gTri" x1="0" y1="0" x2="0" y2="1"><stop offset="0" stop-color="#d6d6d6"/><stop offset="1" stop-color="#b9b9b9"/></linearGradient>
<radialGradient id="gLens" cx="0.38" cy="0.3" r="0.75"><stop offset="0" stop-color="#f2f4fc"/><stop offset="0.3" stop-color="#a9c6f2"/><stop offset="0.75" stop-color="#5f93e0"/><stop offset="1" stop-color="#78b4e8"/></radialGradient>
<linearGradient id="gSilver" x1="0" y1="0" x2="1" y2="0"><stop offset="0" stop-color="#5a6684"/><stop offset="0.35" stop-color="#f0f2f6"/><stop offset="0.7" stop-color="#a3acc0"/><stop offset="1" stop-color="#4a5674"/></linearGradient>
<linearGradient id="gHandle" x1="0" y1="0" x2="1" y2="1"><stop offset="0" stop-color="#f8d9a0"/><stop offset="1" stop-color="#d9892a"/></linearGradient>
<linearGradient id="gBucket" x1="0" y1="0" x2="1" y2="1"><stop offset="0" stop-color="#fff6dc"/><stop offset="0.45" stop-color="#f2c450"/><stop offset="1" stop-color="#e0903a"/></linearGradient>
</defs>
<!-- header/footer (disabled) -->
<rect x="3.5" y="84.5" width="23" height="29" rx="1" fill="#dcdcdc" stroke="#a9a9a9"/>
<rect x="4.5" y="85.5" width="21" height="27" fill="none" stroke="#eaeaea"/>
<rect x="5" y="86" width="20" height="5" fill="#c2c2c2"/>
<rect x="5" y="107" width="20" height="5" fill="#bdbdbd"/>
<!-- Skaliraj -->
<rect x="72.5" y="86.5" width="27" height="27" fill="#ffffff" stroke="#4a8fd8"/>
<rect x="73" y="87" width="21.8" height="21.6" fill="#eaf3fd"/>
<rect x="73" y="87" width="16.6" height="16.2" fill="#d5e8fa"/>
<path d="M89.5 87v16.2H73" fill="none" stroke="#c2dcf6"/>
<path d="M94.8 87v21.6H73" fill="none" stroke="#d8e8f8"/>
<defs><linearGradient id="gSq" x1="0" y1="0" x2="0" y2="1"><stop offset="0" stop-color="#d2e8fc"/><stop offset="1" stop-color="#a6cff6"/></linearGradient></defs><rect x="73" y="87" width="11.5" height="11.5" fill="url(#gSq)"/><path d="M84.5 87v11.5H73" fill="none" stroke="#4a8fd8"/>
<path d="M86.4 100.6 L92.3 106.5" stroke="#262626" stroke-width="2.9"/>
<polygon points="96,103 96,110 89,110" fill="#1c1c1c"/>
<!-- Margine -->
<rect x="118.5" y="84.5" width="23" height="29" rx="1" fill="url(#gPage)" stroke="#7280b2"/>
<path d="M122.5 85v28M137.5 85v28M119 88.5h22M119 109.5h22" stroke="#7d8bbd" fill="none"/>
<!-- Usmjerenje -->
<path d="M170.5 84.5h13l5 5v18h-18z" fill="url(#gPage)" stroke="#7886b6"/>
<path d="M183.5 84.5v5h5" fill="#ffffff" stroke="#7886b6"/>
<path d="M174 91.5h4M174 93.8h7" stroke="#8894c0"/>
<path d="M174.5 95.5h18l5 5v13h-23z" fill="url(#gPage)" stroke="#7280b2"/>
<path d="M192.5 95.5v5h5" fill="#ffffff" stroke="#7280b2"/>
<path d="M179 102h7M179 104.3h9M179 106.4h7M179 108.6h9" stroke="#7886b6"/>
<!-- Veličina -->
<path d="M222.5 84.5v26M221 84.5h3M221 110.5h3" stroke="#3c4868" fill="none"/>
<path d="M226.5 84.5h15l6 6v20h-21z" fill="url(#gPage)" stroke="#7280b2"/>
<path d="M241.5 84.5v6h6" fill="#ffffff" stroke="#7280b2"/>
<path d="M226.5 114.5h21M226.5 113v3M247.5 113v3" stroke="#3c4868" fill="none"/>
<!-- dialog launcher -->
<path d="M250.5 168v-5.5h6" fill="none" stroke="#5a5a5a" stroke-width="1.2"/>
<path d="M253 164.5l3.5 3.5" stroke="#4a4a4a" stroke-width="1.3"/><path d="M257 165.5v3.3h-3.3z" fill="#4a4a4a"/>
<!-- Binoculars -->
<path d="M275 101 L276.5 91.5 Q277.5 87.5 281 87.5 Q285 87.5 285.7 91.5 L287 101z" fill="url(#gSilver)" stroke="#46506e" stroke-width="0.8"/>
<path d="M290 101 L291 91.5 Q292 87.5 295.5 87.5 Q299.5 87.5 300.3 91.5 L302 101z" fill="url(#gSilver)" stroke="#46506e" stroke-width="0.8"/>
<rect x="285" y="94" width="6" height="6" fill="#6a7490"/>
<circle cx="280.5" cy="103.5" r="7" fill="#ffffff" stroke="#3b4a78" stroke-width="1.2"/>
<circle cx="280.5" cy="103.5" r="5" fill="url(#gLens)" stroke="#2f4a90" stroke-width="0.6"/>
<circle cx="296" cy="103.5" r="7" fill="#ffffff" stroke="#3b4a78" stroke-width="1.2"/>
<circle cx="296" cy="103.5" r="5" fill="url(#gLens)" stroke="#2f4a90" stroke-width="0.6"/>
<!-- Knjižne oznake (disabled) -->
<rect x="324.5" y="86.5" width="10" height="10" rx="1.5" fill="url(#gGray)" stroke="#a6a6a6"/>
<rect x="315.5" y="104.5" width="8" height="8" rx="1.5" fill="url(#gGray)" stroke="#a6a6a6"/>
<rect x="325.5" y="104.5" width="8" height="8" rx="1.5" fill="url(#gGray)" stroke="#a6a6a6"/>
<rect x="335.5" y="104.5" width="8" height="8" rx="1.5" fill="url(#gGray)" stroke="#a6a6a6"/>
<path d="M329.5 97v6M319.5 103v-2.5h20v2.5" fill="none" stroke="#9c9c9c"/>
<!-- nav -->
<rect x="384.5" y="92" width="2" height="15" rx="1" fill="#d0d0d0" stroke="#a4a4a4"/>
<polygon points="404.5,90 404.5,108.7 388.5,99.4" fill="url(#gTri)" stroke="#a4a4a4"/>
<polygon points="467,90 467,108.7 450,99.4" fill="url(#gTri)" stroke="#a4a4a4"/>
<polygon points="506,90 506,108.7 523,99.4" fill="url(#gTri)" stroke="#a4a4a4"/>
<polygon points="551.5,90 551.5,108.7 567.5,99.4" fill="url(#gTri)" stroke="#a4a4a4"/>
<rect x="569.5" y="92" width="2" height="15" rx="1" fill="#d0d0d0" stroke="#a4a4a4"/>
<!-- pointer selected -->
<rect x="593.5" y="78.5" width="23" height="23" fill="#cedef5" stroke="#a9bfe0"/>
<path d="M601.2 82.3 L601.2 94.6 L604.2 91.6 L606.7 97.6 L608.4 96.9 L605.9 91 L609.9 90.6z" fill="#202020" stroke="#202020" stroke-width="0.6" stroke-linejoin="round"/>
<!-- hand -->
<path d="M602.3 122.8 L600.6 119.6 L597.6 115.8 Q596.8 114.3 598.2 113.9 Q599.3 113.7 600.6 115.4 L600.6 110 Q600.7 108.6 601.8 108.6 Q602.9 108.6 603 110 L603.2 113.4 L603.4 108.3 Q603.5 107 604.7 107 Q605.9 107 606 108.3 L606.1 113.3 L606.6 109 Q606.8 107.8 607.9 107.9 Q609 108 609 109.3 L608.9 113.8 L609.7 111.3 Q610.1 110.2 611.2 110.5 Q612.2 110.8 612 112 L610.6 118.4 L609.8 122.8 Z" fill="#ffffff" stroke="#1e1e1e" stroke-width="0.9" stroke-linejoin="round"/>
<path d="M608.2 122.5 L610 118.5 L611.7 112" fill="none" stroke="#111" stroke-width="1.3"/>
<path d="M602.6 121.8 h6.4" stroke="#bdbdbd" stroke-width="1"/>
<!-- small zoom -->
<path d="M606.2 141.2 L610.6 145.6" stroke="#d48a2a" stroke-width="2.8" stroke-linecap="round"/>
<path d="M606.8 141.8 L610.3 145.3" stroke="#f3c060" stroke-width="1.2" stroke-linecap="round"/>
<path d="M605.2 140.2 L607 142" stroke="#3e5a8a" stroke-width="2.4"/>
<circle cx="602.5" cy="137.3" r="4.3" fill="#e6f4fc" stroke="#5f7fae" stroke-width="1.4"/>
<circle cx="602.5" cy="137.3" r="1.5" fill="#ffffff" stroke="#c0392b" stroke-width="1.1"/>
<!-- multi pages (disabled) -->
<rect x="639.5" y="85.5" width="11" height="13" rx="1" fill="#dcdcdc" stroke="#9d9d9d"/>
<rect x="652.5" y="85.5" width="11" height="13" rx="1" fill="#dcdcdc" stroke="#9d9d9d"/>
<rect x="639.5" y="100.5" width="11" height="13" rx="1" fill="#dcdcdc" stroke="#9d9d9d"/>
<!-- magnifiers -->
<g id="mag">
<path d="M711 105 L718 112" stroke="#3e4c78" stroke-width="4.2" stroke-linecap="round"/>
<path d="M713.2 107.2 L718.3 112.3" stroke="url(#gHandle)" stroke-width="3.4" stroke-linecap="round"/>
<circle cx="702.9" cy="96.9" r="9.8" fill="#ffffff" stroke="#3b4f8a" stroke-width="1.3"/>
<circle cx="702.9" cy="96.9" r="7.4" fill="url(#gLens)" stroke="#3a5ba8" stroke-width="0.8"/>
</g>
<rect x="698.8" y="95.6" width="8.2" height="2.6" fill="#1a2f85"/>
<use href="#mag" transform="translate(41.9 0)"/>
<use href="#mag" transform="translate(86.7 0)"/>
<path d="M785.4 96.9h8.4M789.6 92.7v8.4" stroke="#1a2f85" stroke-width="2.4"/>
<!-- Boja stranice -->
<path d="M852.5 86.5h15l6 6v20h-21z" fill="url(#gPage)" stroke="#7280b2"/>
<path d="M867.5 86.5v6h6" fill="#ffffff" stroke="#7280b2"/>
<path d="M853.5 89.5 L863 95.5 L862.5 102 L855 109.8 L849 107.5 L844.5 100.5 L845.5 97.5z" fill="url(#gBucket)" stroke="#b8742e" stroke-width="0.9" stroke-linejoin="round"/>
<path d="M854 90.5 Q859 91 862.5 95.5 L858 96.5z" fill="#7a3614"/>
<path d="M857.5 96.5 Q864.5 96.5 865.2 107.5" fill="none" stroke="#3f8a1c" stroke-width="4.2" stroke-linecap="round"/>
<path d="M857.5 96.5 Q864 96.8 864.6 107" fill="none" stroke="#7cc83a" stroke-width="2.4" stroke-linecap="round"/>
<path d="M847 92.5 Q844.5 89.5 849 90 Q852 91 855.5 100.3" fill="none" stroke="#9a5220" stroke-width="0.9"/>
<circle cx="855.5" cy="100.5" r="0.9" fill="#ffffff" stroke="#8a4a1c" stroke-width="0.6"/>
<!-- chevrons -->
<g fill="none" stroke="#5a5a5a" stroke-width="1.4">
<path d="M82.8 137.2l3.2 3.2l3.2-3.2"/>
<path d="M126.3 137.2l3.2 3.2l3.2-3.2"/>
<path d="M181 137.2l3.2 3.2l3.2-3.2"/>
<path d="M232.8 137.2l3.2 3.2l3.2-3.2"/>
<path d="M744.8 137.2l3.2 3.2l3.2-3.2"/>
<path d="M856.8 137.2l3.2 3.2l3.2-3.2"/>
</g>
<path d="M648 137.2l3.2 3.2l3.2-3.2" fill="none" stroke="#a8a8a8" stroke-width="1.4"/>
</svg>

</div>
<div style="position:absolute;left:877px;top:0px;width:363px;height:1px;background:#c3cbdc;"></div>
<div id="s2" style="position:absolute;left:500px;top:428px;width:740px;height:286px;overflow:hidden;background:#fff">
<div style="position:absolute;left:-500px;top:-428px;width:1240px;height:714px">
<div class=t style="left:819.40px;top:423px;font-size:13px;font-weight:bold;font-style:italic;color:#000;transform:scaleX(1.0219);transform-origin:0 0;">-1716 Vikendice-</div>
<div class=t style="left:835.70px;top:450px;font-size:12px;font-weight:normal;font-style:normal;color:#000;">- sve stavke -</div>
<div class=t style="left:1062.10px;top:449px;font-size:13.5px;font-weight:normal;font-style:normal;color:#000;transform:scaleX(0.9581);transform-origin:0 0;">Datum ispisa: 30.06.2021.</div>
<svg style="position:absolute;left:1225px;top:429px" width="1" height="280"><line x1="0.5" y1="0" x2="0.5" y2="279" stroke="#000" stroke-width="1" stroke-dasharray="1 1"/></svg>
<div class=t style="left:508.90px;top:500px;font-size:14px;font-weight:bold;font-style:normal;color:#000;transform:scaleX(1.0414);transform-origin:0 0;">Šifra iz razreza:</div>
<div class=t style="left:635.60px;top:499px;font-size:13px;font-weight:bold;font-style:normal;color:#000;">7</div>
<div class=t style="left:706.10px;top:500px;font-size:13px;font-weight:bold;font-style:normal;color:#000;transform:scaleX(0.9748);transform-origin:0 0;">GANTAR  JANEZ,</div>
<div class=t style="left:1078.80px;top:503px;font-size:14px;font-weight:normal;font-style:normal;color:#f0101c;transform:scaleX(0.9958);transform-origin:0 0;">DO 30.06.2021</div>
<div style="position:absolute;left:501px;top:540px;width:725px;height:2px;background:#000;"></div>
<div class=t style="left:518.00px;top:564px;font-size:13px;font-weight:normal;font-style:normal;color:#000;transform:scaleX(0.9634);transform-origin:0 0;">Rbr.</div>
<div class=t style="left:547.60px;top:548px;font-size:12px;font-weight:normal;font-style:normal;color:#000;">Datum</div>
<div class=t style="left:547.60px;top:563px;font-size:12px;font-weight:normal;font-style:normal;color:#000;">knjiženja</div>
<div class=t style="left:601.60px;top:548px;font-size:12px;font-weight:normal;font-style:normal;color:#000;">Datum</div>
<div class=t style="left:601.60px;top:563px;font-size:12px;font-weight:normal;font-style:normal;color:#000;">doku.</div>
<div class=t style="left:654.80px;top:548px;font-size:12px;font-weight:normal;font-style:normal;color:#000;">Datum</div>
<div class=t style="left:654.80px;top:563px;font-size:12px;font-weight:normal;font-style:normal;color:#000;">valute</div>
<div class=t style="left:714.50px;top:564px;font-size:12px;font-weight:normal;font-style:normal;color:#000;transform:scaleX(0.9865);transform-origin:0 0;">VD</div>
<div class=t style="left:751.80px;top:548px;font-size:12px;font-weight:normal;font-style:normal;color:#000;">Broj</div>
<div class=t style="left:753.80px;top:563px;font-size:12px;font-weight:normal;font-style:normal;color:#000;">tem.</div>
<div class=t style="left:783.00px;top:548px;font-size:12px;font-weight:normal;font-style:normal;color:#000;">Opis</div>
<div class=t style="left:783.00px;top:563px;font-size:12px;font-weight:normal;font-style:normal;color:#000;transform:scaleX(0.9832);transform-origin:0 0;">dokumenta</div>
<div class=t style="left:866.80px;top:548px;font-size:13px;font-weight:normal;font-style:normal;color:#000;transform:scaleX(1.0209);transform-origin:0 0;">Vrsta</div>
<div class=t style="left:866.80px;top:564px;font-size:13px;font-weight:normal;font-style:normal;color:#000;transform:scaleX(1.0164);transform-origin:0 0;">fakture</div>
<div class=t style="left:913.00px;top:548px;font-size:12px;font-weight:normal;font-style:normal;color:#000;">Broj</div>
<div class=t style="left:913.00px;top:563px;font-size:12px;font-weight:normal;font-style:normal;color:#000;transform:scaleX(0.9882);transform-origin:0 0;">dokumenta</div>
<div class=t style="left:1010.00px;top:565px;font-size:12px;font-weight:normal;font-style:normal;color:#000;">Duguje</div>
<div class=t style="left:1072.90px;top:564px;font-size:12px;font-weight:normal;font-style:normal;color:#000;">Potražuje</div>
<div class=t style="left:1185.70px;top:564px;font-size:13px;font-weight:normal;font-style:normal;color:#000;transform:scaleX(1.0256);transform-origin:0 0;">Saldo</div>
<div style="position:absolute;left:501px;top:588px;width:725px;height:2px;background:#000;"></div>
<div class=t style="left:529.75px;top:589px;font-size:13px;font-weight:normal;font-style:normal;color:#000;">1</div>
<div class=t style="left:548.00px;top:589px;font-size:12px;font-weight:normal;font-style:normal;color:#000;">01.01.20</div>
<div class=t style="left:601.60px;top:589px;font-size:12px;font-weight:normal;font-style:normal;color:#000;transform:scaleX(1.0139);transform-origin:0 0;">29.04.19</div>
<div class=t style="left:654.80px;top:589px;font-size:12px;font-weight:normal;font-style:normal;color:#000;transform:scaleX(1.0139);transform-origin:0 0;">29.05.19</div>
<div class=t style="left:721.69px;top:589px;font-size:12px;font-weight:normal;font-style:normal;color:#000;">0</div>
<div class=t style="left:782.70px;top:589px;font-size:12px;font-weight:normal;font-style:normal;color:#000;">P.S.2020</div>
<div class=t style="left:908.30px;top:589px;font-size:12px;font-weight:normal;font-style:normal;color:#000;transform:scaleX(0.9600);transform-origin:0 0;">901</div>
<div class=t style="left:1023.83px;top:590px;font-size:12px;font-weight:normal;font-style:normal;color:#000;">1,00</div>
<div class=t style="left:1103.42px;top:590px;font-size:12px;font-weight:normal;font-style:normal;color:#000;">0,00</div>
<div class=t style="left:1197.62px;top:590px;font-size:12px;font-weight:normal;font-style:normal;color:#000;">1,00</div>
<div class=t style="left:529.75px;top:606px;font-size:13px;font-weight:normal;font-style:normal;color:#000;">2</div>
<div class=t style="left:548.00px;top:606px;font-size:12px;font-weight:normal;font-style:normal;color:#000;">20.05.20</div>
<div class=t style="left:601.60px;top:606px;font-size:12px;font-weight:normal;font-style:normal;color:#000;transform:scaleX(1.0139);transform-origin:0 0;">20.05.20</div>
<div class=t style="left:654.80px;top:606px;font-size:12px;font-weight:normal;font-style:normal;color:#000;transform:scaleX(1.0139);transform-origin:0 0;">30.06.20</div>
<div class=t style="left:721.69px;top:606px;font-size:12px;font-weight:normal;font-style:normal;color:#000;">1</div>
<div class=t style="left:768.17px;top:606px;font-size:12px;font-weight:normal;font-style:normal;color:#000;">1</div>
<div class=t style="left:782.70px;top:606px;font-size:12px;font-weight:normal;font-style:normal;color:#000;">Zaduženje</div>
<div class=t style="left:908.30px;top:606px;font-size:12px;font-weight:normal;font-style:normal;color:#000;transform:scaleX(0.9600);transform-origin:0 0;">001</div>
<div class=t style="left:1000.45px;top:607px;font-size:12px;font-weight:normal;font-style:normal;color:#000;">1.380,00</div>
<div class=t style="left:1103.42px;top:607px;font-size:12px;font-weight:normal;font-style:normal;color:#000;">0,00</div>
<div class=t style="left:1174.25px;top:607px;font-size:12px;font-weight:normal;font-style:normal;color:#000;">1.381,00</div>
<div class=t style="left:529.75px;top:636px;font-size:13px;font-weight:normal;font-style:normal;color:#000;">3</div>
<div class=t style="left:548.00px;top:636px;font-size:12px;font-weight:normal;font-style:normal;color:#000;">03.07.20</div>
<div class=t style="left:601.60px;top:636px;font-size:12px;font-weight:normal;font-style:normal;color:#000;transform:scaleX(1.0139);transform-origin:0 0;">03.07.20</div>
<div class=t style="left:654.80px;top:636px;font-size:12px;font-weight:normal;font-style:normal;color:#000;transform:scaleX(1.0139);transform-origin:0 0;">03.07.20</div>
<div class=t style="left:721.69px;top:636px;font-size:12px;font-weight:normal;font-style:normal;color:#000;">2</div>
<div class=t style="left:782.70px;top:636px;font-size:12px;font-weight:normal;font-style:normal;color:#000;">Izv.184</div>
<div class=t style="left:908.30px;top:636px;font-size:12px;font-weight:normal;font-style:normal;color:#000;transform:scaleX(0.9600);transform-origin:0 0;">901</div>
<div class=t style="left:1023.83px;top:637px;font-size:12px;font-weight:normal;font-style:normal;color:#000;">0,00</div>
<div class=t style="left:1080.05px;top:637px;font-size:12px;font-weight:normal;font-style:normal;color:#000;">1.380,00</div>
<div class=t style="left:1197.62px;top:637px;font-size:12px;font-weight:normal;font-style:normal;color:#000;">1,00</div>
<div class=t style="left:783.60px;top:622px;font-size:12px;font-weight:normal;font-style:normal;color:#000;transform:scaleX(0.9687);transform-origin:0 0;">1/2020</div>
<div style="position:absolute;left:501px;top:655px;width:725px;height:2px;background:#000;"></div>
<div class=t style="left:884.80px;top:662px;font-size:13px;font-weight:bold;font-style:normal;color:#000;transform:scaleX(0.9706);transform-origin:0 0;">Ukupno:</div>
<div class=t style="left:1001.00px;top:661px;font-size:12px;font-weight:bold;font-style:normal;color:#000;transform:scaleX(0.9840);transform-origin:0 0;">1.381,00</div>
<div class=t style="left:1080.00px;top:661px;font-size:12px;font-weight:bold;font-style:normal;color:#000;">1.380,00</div>
<div class=t style="left:1199.00px;top:661px;font-size:12px;font-weight:bold;font-style:normal;color:#000;transform:scaleX(0.9626);transform-origin:0 0;">1,00</div>
<div style="position:absolute;left:501px;top:680px;width:725px;height:3px;background:#000;"></div>
<svg style="position:absolute;left:0;top:0" width="1240" height="714"><line x1="1191" y1="628" x2="1113" y2="532" stroke="#fb0007" stroke-width="3.2"/><polygon points="1104.6,521.5 1117.6,530.4 1110.4,536.2" fill="#fb0007"/></svg>
<div style="position:absolute;left:1180px;top:628px;width:59px;height:26px;background:transparent;box-sizing:border-box;border:3px solid #fb0007;"></div>
</div></div>
</body></html>
